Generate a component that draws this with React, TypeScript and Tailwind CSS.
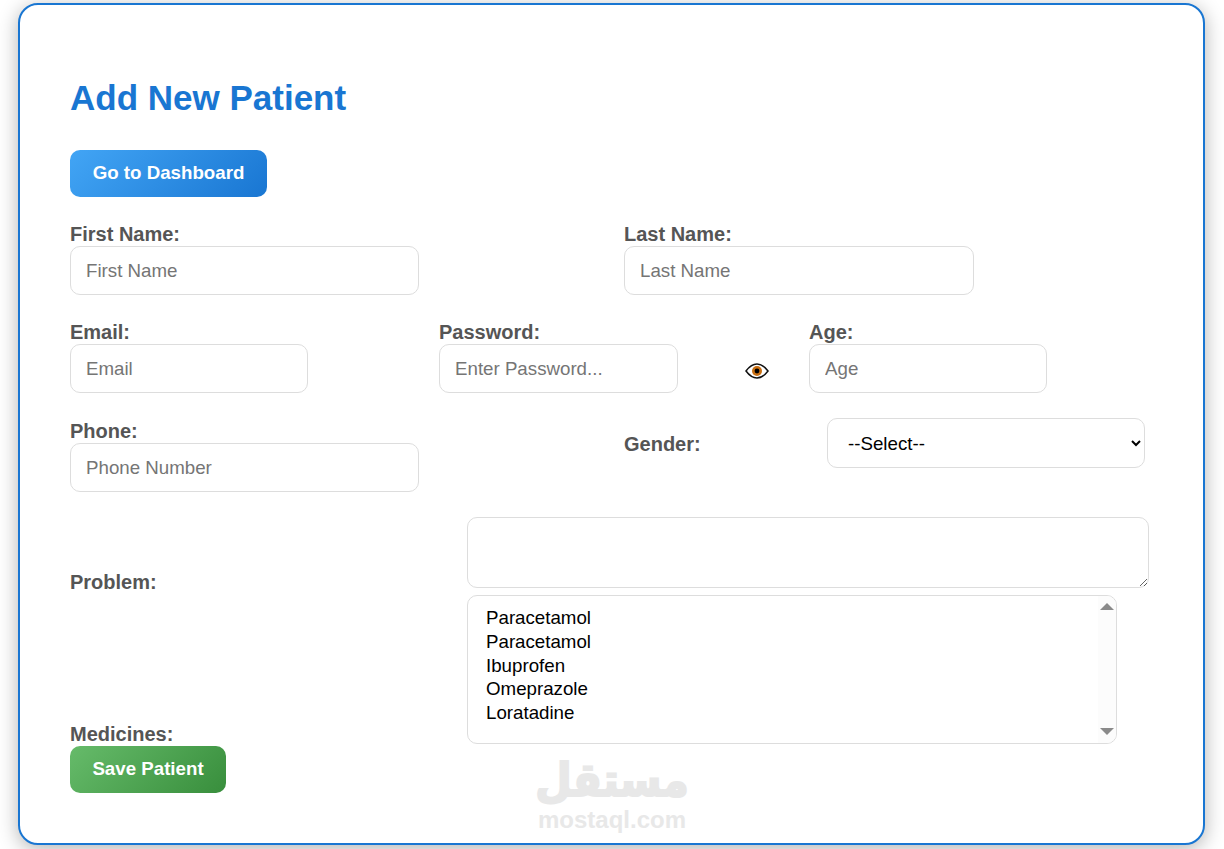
import React from 'react'

const font = "font-['Liberation_Sans',Arial,sans-serif]"
const labelCls = 'block h-[22px] text-[20px] leading-[21px] font-bold text-[#555555]'
const inputCls =
  'block h-[49px] rounded-[10px] border border-[#dddddd] bg-white px-[15px] pt-[1px] text-[18.72px] text-black outline-none placeholder:text-[#757575]'

function EyeIcon() {
  return (
    <svg width="24" height="16" viewBox="0 0 24 16" aria-hidden="true">
      <path d="M1 8 C5 2.6 8.5 1 12 1 C15.500 1 19 2.600 23 8 C19 13.400 15.500 15 12 15 C8.500 15 5 13.400 1 8 Z" fill="#ffffff" stroke="#111111" strokeWidth="1.500" />
      <circle cx="12" cy="8" r="5" fill="#c96f12" />
      <circle cx="12" cy="8" r="2.400" fill="#000000" />
    </svg>
  )
}

const medicines = ['Paracetamol', 'Paracetamol', 'Ibuprofen', 'Omeprazole', 'Loratadine']

export default function App() {
  return (
    <div className={`${font} min-h-[849px] overflow-hidden bg-white pt-[3px] pl-[18px] pr-[19px]`}>
      <div className="h-[842px] rounded-[20px] border-2 border-[#1976d2] bg-white px-[50px] pt-[54px] shadow-[0_4px_20px_rgba(0,0,0,0.3)]">
        <h1 className="-mt-[1px] h-[92px] text-[35px] leading-[80px] font-bold text-[#1976d2]">Add New Patient</h1>

        <button className="block h-[47px] w-[197px] rounded-[10px] bg-[linear-gradient(135deg,#42a5f5,#1976d2)] text-[18.72px] font-bold text-white">
          Go to Dashboard
        </button>

        <div className="mt-[27px] grid grid-cols-[554px_1fr]">
          <div>
            <label className={labelCls}>First Name:</label>
            <input className={`${inputCls} w-[349px]`} placeholder="First Name" />
          </div>
          <div>
            <label className={labelCls}>Last Name:</label>
            <input className={`${inputCls} w-[350px]`} placeholder="Last Name" />
          </div>
        </div>

        <div className="mt-[27px] flex">
          <div className="w-[369px]">
            <label className={labelCls}>Email:</label>
            <input className={`${inputCls} w-[238px]`} placeholder="Email" />
          </div>
          <div className="flex w-[370px]">
            <div>
              <label className={labelCls}>Password:</label>
              <input className={`${inputCls} w-[239px]`} placeholder="Enter Password..." />
            </div>
            <div className="mt-[41px] ml-[67px]">
              <EyeIcon />
            </div>
          </div>
          <div>
            <label className={labelCls}>Age:</label>
            <input className={`${inputCls} w-[238px]`} placeholder="Age" />
          </div>
        </div>

        <div className="mt-[25px] grid grid-cols-[554px_1fr]">
          <div className="pt-[3px]">
            <label className={labelCls}>Phone:</label>
            <input className={`${inputCls} w-[349px]`} placeholder="Phone Number" />
          </div>
          <div className="flex items-start">
            <label className={`${labelCls} box-content w-[203px] pt-[16px]`}>Gender:</label>
            <select className="h-[50px] w-[318px] rounded-[10px] border border-[#dddddd] bg-white pr-[19px] pl-[16px] text-[18.72px] text-black outline-none">
              <option>--Select--</option>
            </select>
          </div>
        </div>

        <div className="mt-[25px] grid grid-cols-[397px_1fr]">
          <div className="flex flex-col justify-between pt-[55px]">
            <label className={labelCls}>Problem:</label>
            <label className={labelCls}>Medicines:</label>
          </div>
          <div className="pb-[2px]">
            <textarea className="block h-[71px] w-[682px] rounded-[10px] border border-[#dddddd] bg-white outline-none" />
            <div className="mt-[7px] flex h-[149px] w-[650px] justify-between overflow-hidden rounded-[10px] border border-[#dddddd] bg-white">
              <ul className="pt-[10px] pl-[18px] text-[18.72px] leading-[23.8px] text-black">
                {medicines.map((m, i) => (
                  <li key={i}>{m}</li>
                ))}
              </ul>
              <div className="flex w-[18px] flex-col items-center justify-between bg-[#fcfcfc] pt-[7px] pb-[8px]">
                <span className="h-0 w-0 border-x-[7px] border-b-[7px] border-x-transparent border-b-[#8a8a8a]" />
                <span className="h-0 w-0 border-x-[7px] border-t-[7px] border-x-transparent border-t-[#8a8a8a]" />
              </div>
            </div>
          </div>
        </div>

        <button className="block h-[47px] w-[156px] rounded-[10px] bg-[linear-gradient(135deg,#66bb6a,#388e3c)] text-[18.72px] font-bold text-white">
          Save Patient
        </button>
      </div>

      {/* mostaql watermark */}
      <div className="pointer-events-none absolute top-[753px] left-[537px] flex w-[150px] flex-col items-center text-[#e8e8e8]">
        <span dir="rtl" className="origin-top scale-y-[1.1] font-['DejaVu_Sans',sans-serif] text-[42px] leading-[49px] font-bold [-webkit-text-stroke:2px_#e8e8e8]">
          مستقل
        </span>
        <span className="mt-[5px] text-[24px] leading-[26px] font-bold">mostaql.com</span>
      </div>
    </div>
  )
}
